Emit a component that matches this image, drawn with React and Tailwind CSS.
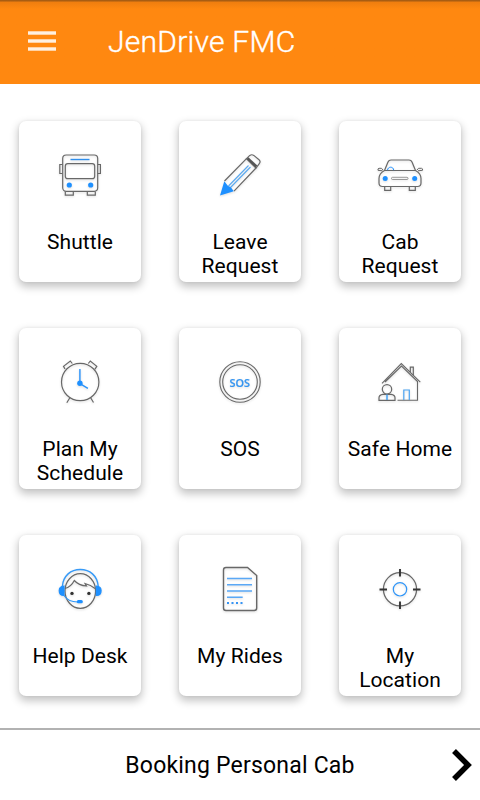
import React from "react";

const BusIcon = () => (
  <>
    <rect x="12.7" y="10" width="35" height="36.3" rx="3.5" />
    <rect x="15.3" y="18.7" width="29.4" height="15" rx="2.5" />
    <path d="M12.5 19.5h-2.7v9h2.7M47.7 19.5h2.7v9h-2.7M15.3 46.5v3.7h8v-3.7M37.3 46.5v3.7h8v-3.7" />
    <path d="M20.5 14.5h19" stroke="#2f8fec" strokeWidth="1.4" />
    <circle cx="19.3" cy="40" r="2.6" fill="#1e90ff" stroke="none" />
    <circle cx="40.7" cy="40" r="2.6" fill="#1e90ff" stroke="none" />
  </>
);

const PencilIcon = () => (
  <>
    <path d="M14.5 36 36.500 13.700M24 46.200 46 23" />
    <path d="M36.500 13.700l3.300-3.300q2-1.300 4 0l5.200 4.300q2 2 .3 4l-3.300 4.300z" />
    <path d="M37.500 13.200l9 8.300" stroke="#555" strokeWidth="2.500" />
    <path d="M18.500 41 38.500 20.500M20.500 42.500 40.500 22" stroke="#5aa9f0" strokeWidth="1.100" />
    <path d="M14.300 36.200 10 50.500 23.800 46.200 20.800 42.200 17.800 40.800z" fill="#1e90ff" stroke="none" />
  </>
);

const CarIcon = () => (
  <>
    <path d="M14.500 25.500 18 17q.8-2 3-2h18q2.200 0 3 2l3.500 8.500" />
    <path d="M14.500 25.500h31q5.500 3 5.500 8v4.500q0 3.500-3.500 3.500h-35Q9 41.500 9 38v-4.500q0-5 5.500-8z" />
    <path d="M13 25l-1.500-1.700H9q-1.500.2-1 2l4.500.5M47 25l1.500-1.700H51.500q1.500.2 1 2l-4.500.5" strokeWidth="1" />
    <path d="M14.700 41.700v3.600h6v-3.600M39.300 41.700v3.600h6v-3.600" />
    <rect x="21.500" y="32.300" width="16.500" height="2.200" rx="1" strokeWidth=".8" stroke="#808080" />
    <path d="M17.500 25.200c.3-4 6-4 6.200 0" stroke="#1e90ff" strokeWidth="1" />
    <circle cx="15.200" cy="33.500" r="2.500" fill="#1e90ff" stroke="none" />
    <circle cx="44.700" cy="33.500" r="2.500" fill="#1e90ff" stroke="none" />
  </>
);

const ClockIcon = () => (
  <>
    <circle cx="30.200" cy="30" r="18.700" />
    <path d="M15 17l-1.500-2.700L20.300 9l2 2.500M38.300 11.500l2-2.500 6.500 5.300-2 3M20 45.500l-3.200 5.200M40.500 45.500l3 5" />
    <path d="M29.900 17v14.500l8 4.800" stroke="#2992fa" strokeWidth="1.400" />
    <circle cx="29.900" cy="31.200" r="2.700" fill="#1e90ff" stroke="none" />
  </>
);

const SosIcon = () => (
  <>
    <circle cx="30" cy="30" r="20.200" strokeWidth="1.100" />
    <circle cx="30" cy="30" r="17.300" strokeWidth="1.100" />
    <text x="29.800" y="34.500" textAnchor="middle" fill="#3595f0" stroke="#3595f0" strokeWidth=".2" fontSize="11.500" fontFamily="Open Sans, sans-serif" textLength="20.500" lengthAdjust="spacingAndGlyphs" fontWeight="600">SOS</text>
  </>
);

const HomeIcon = () => (
  <>
    <path d="M12 31.300 31.300 11.500 50.300 30.200M15 30 31.500 14 47.500 29.500V48.300H27.500" strokeWidth="1.100" />
    <path d="M40.300 20v-4.800h3v8" />
    <path d="M33.800 48v-10h5.500v10" stroke="#4ba3f2" />
    <circle cx="17" cy="37.300" r="4.700" />
    <path d="M9 48.300v-2.500q0-3 4-3.500h8q4 .5 4 3.500v2.500z" />
    <path d="M17 42.500v5.500" stroke="#42a0f5" strokeWidth="1.500" />
  </>
);

const HeadsetIcon = () => (
  <>
    <ellipse cx="30.300" cy="32" rx="15.300" ry="17.300" />
    <path d="M14.800 29.500Q21 28 24.300 21.500q4.500 5 12.200 5.500l-1.500-2.500q6 1.500 10 5" />
    <path d="M12.300 27.500c1-11 8.500-17 18-17s17 6 18 17" stroke="#369af8" strokeWidth="1.400" />
    <path d="M14 27v9.500q-4.800-.3-4.800-4.800T14 27zM46.300 27v9.500q4.800-.3 4.800-4.800T46.300 27z" fill="#1e90ff" stroke="#1e90ff" />
    <path d="M14 36.500q4.500 6.500 13.500 6.500" stroke="#3096f8" strokeWidth="1.200" />
    <rect x="26.800" y="41" width="6" height="3.200" rx="1.500" fill="#1e90ff" stroke="none" />
    <circle cx="22" cy="34.400" r="1.700" fill="#333" stroke="none" />
    <circle cx="38.900" cy="34.400" r="1.700" fill="#333" stroke="none" />
  </>
);

const DocumentIcon = () => (
  <>
    <path d="M16 8.500h21.500l9.200 8V49q0 2.500-2.500 2.500H16q-2.500 0-2.500-2.500V11q0-2.500 2.500-2.500z" strokeWidth="1.400" />
    <path d="M17 19.500h25M17 25.700h25M17 32h25M17 38.300h15.700" stroke="#5aa8f6" strokeWidth="1.500" />
    <path d="M17 44h16" stroke="#3594f5" strokeWidth="1.900" strokeDasharray="2 2.500" />
  </>
);

const TargetIcon = () => (
  <>
    <circle cx="30" cy="30.300" r="16.600" />
    <circle cx="30" cy="30.300" r="6.700" stroke="#2f95f8" />
    <path d="M30 10v7.500M30 42.500V50M9.500 30.500H17M43 30.500h7.500" stroke="#333" strokeWidth="1.900" />
  </>
);

const menuItems = [
  { id: "shuttle", lines: ["Shuttle"], icon: BusIcon },
  { id: "leave", lines: ["Leave", "Request"], icon: PencilIcon },
  { id: "cab", lines: ["Cab", "Request"], icon: CarIcon },
  { id: "schedule", lines: ["Plan My", "Schedule"], icon: ClockIcon },
  { id: "sos", lines: ["SOS"], icon: SosIcon },
  { id: "home", lines: ["Safe Home"], icon: HomeIcon },
  { id: "help", lines: ["Help Desk"], icon: HeadsetIcon },
  { id: "rides", lines: ["My Rides"], icon: DocumentIcon },
  { id: "location", lines: ["My", "Location"], icon: TargetIcon },
];

const MenuCard = ({ item }) => {
  const Icon = item.icon;
  return (
    <button className="flex h-[161px] w-[122px] flex-col items-center rounded-[7px] bg-white pt-6 shadow-[0_4px_9px_1px_rgba(0,0,0,0.23),0_0_3px_rgba(0,0,0,0.06)]">
      <svg viewBox="0 0 60 60" className="h-[60px] w-[60px] shrink-0 drop-shadow-[0_1px_1px_rgba(0,0,0,0.14)]" fill="none" stroke="#686868" strokeWidth="1.2">
        <Icon />
      </svg>
      <span className="mt-[25px] text-[21px] leading-6 tracking-[0.06px] whitespace-nowrap text-black">
        {item.lines.map((line) => (
          <span key={line} className="block">{line}</span>
        ))}
      </span>
    </button>
  );
};

const App = () => {
  return (
    <div className="flex h-[800px] w-[480px] flex-col overflow-hidden bg-white font-[Roboto,sans-serif]">
      {/* App bar */}
      <header className="flex h-[84px] shrink-0 items-center bg-linear-to-b from-[#a85d12] from-[1px] via-[#ee7e0f] via-[2px] to-[#ff8810] to-[9px] pl-7 text-white">
        <button className="mb-[2px] flex w-7 flex-col gap-1" aria-label="Menu">
          <span className="h-1 bg-linear-to-b from-white/50 via-white to-white/50" />
          <span className="h-1 bg-linear-to-b from-white/50 via-white to-white/50" />
          <span className="h-1 bg-linear-to-b from-white/50 via-white to-white/50" />
        </button>
        <h1 className="ml-[52px] text-[30px] leading-9 font-light tracking-[0.25px] [-webkit-text-stroke:0.4px_white]">JenDrive FMC</h1>
      </header>

      {/* Services */}
      <main className="grid grow grid-cols-3 content-start justify-items-center gap-y-[46px] pt-[37px]">
        {menuItems.map((item) => (
          <MenuCard key={item.id} item={item} />
        ))}
      </main>

      {/* Personal booking */}
      <footer className="flex h-[72px] shrink-0 items-center border-t-2 border-[#b2b2b2] pr-2">
        <span className="grow pt-[2px] pl-[28px] text-center text-[23px] tracking-[0.2px] text-black">Booking Personal Cab</span>
        <svg viewBox="0 0 20 34" className="h-[34px] w-5" fill="none" stroke="#000" strokeWidth="5.5">
          <path d="M2 3 16 17 2 31" />
        </svg>
      </footer>
    </div>
  );
};

export default App;
